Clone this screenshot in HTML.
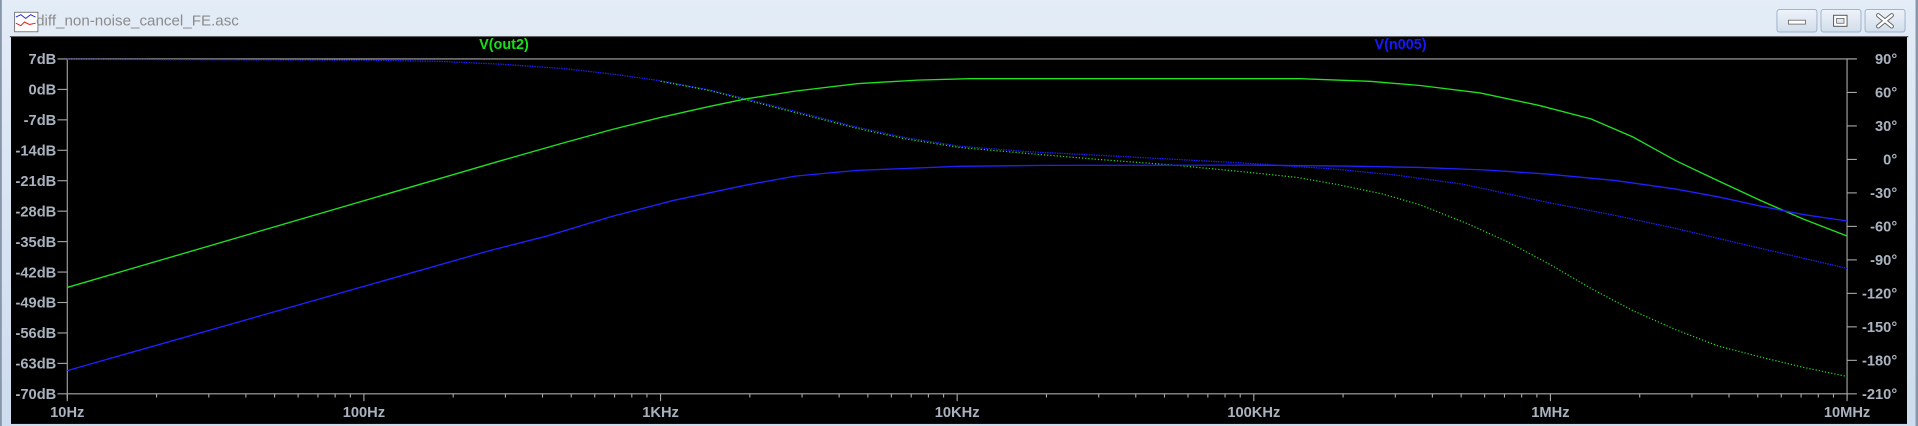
<!DOCTYPE html>
<html><head><meta charset="utf-8"><style>
html,body{margin:0;padding:0;background:#dfe8f3;overflow:hidden}
svg{display:block}
text{font-family:"Liberation Sans",sans-serif}
</style></head><body>
<svg id="s" width="1918" height="426" viewBox="0 0 1568 348.3" preserveAspectRatio="none" xmlns="http://www.w3.org/2000/svg">
<defs>
<linearGradient id="tb" x1="0" y1="0" x2="0" y2="1"><stop offset="0" stop-color="#e3ecf7"/><stop offset="1" stop-color="#cddcee"/></linearGradient>
<linearGradient id="bt" x1="0" y1="0" x2="0" y2="1"><stop offset="0" stop-color="#eef3f9"/><stop offset="1" stop-color="#d2deec"/></linearGradient>
</defs>
<rect x="0" y="0" width="1568" height="348.3" fill="url(#tb)"/>
<rect x="0" y="0" width="1.5" height="348.3" fill="#8796a8"/>
<rect x="1566" y="0" width="2" height="348.3" fill="#8796a8"/>
<rect x="12" y="10" width="19" height="16" fill="#fff" stroke="#555" stroke-width="0.6"/>
<polyline points="13,14 17,12 21,15 25,12 29,14" fill="none" stroke="#2b2bd8" stroke-width="0.8"/>
<polyline points="13,19 17,21 20,18 24,20 29,19" fill="none" stroke="#e02020" stroke-width="0.8"/>
<text x="29.5" y="21" font-size="12.4" fill="#8c8c8c">diff_non-noise_cancel_FE.asc</text>
<g stroke="#8aa0bb" stroke-width="0.6" fill="url(#bt)">
<rect x="1452.7" y="7.8" width="32.7" height="18.4" rx="2"/>
<rect x="1488.7" y="7.8" width="32.7" height="18.4" rx="2"/>
<rect x="1524.7" y="7.8" width="32.7" height="18.4" rx="2"/>
</g>
<rect x="1462" y="16.5" width="14" height="3.2" fill="#fff" stroke="#555" stroke-width="0.6"/>
<rect x="1499" y="12.5" width="11" height="9" fill="#fff" stroke="#555" stroke-width="0.8"/>
<rect x="1501.5" y="15" width="6" height="4" fill="#dfe8f3" stroke="#555" stroke-width="0.6"/>
<g stroke="#666" stroke-width="3.6" stroke-linecap="round"><line x1="1535.5" y1="12.5" x2="1546.5" y2="21.5"/><line x1="1546.5" y1="12.5" x2="1535.5" y2="21.5"/></g>
<g stroke="#fff" stroke-width="2" stroke-linecap="round"><line x1="1535.5" y1="12.5" x2="1546.5" y2="21.5"/><line x1="1546.5" y1="12.5" x2="1535.5" y2="21.5"/></g>
<rect x="8" y="29.5" width="1552" height="1" fill="#555"/>
<rect x="9" y="30.3" width="1550" height="316.3" fill="#000"/>
<g id="axes" stroke="#a8a8a8" stroke-width="0.9" fill="none">
<line x1="55" y1="48.2" x2="1518" y2="48.2"/>
<line x1="55" y1="48.2" x2="55" y2="326"/>
<line x1="1510" y1="48.2" x2="1510" y2="326"/>
<line x1="55" y1="322" x2="1510" y2="322"/>
</g>
<g id="lab" font-size="12" font-weight="bold" fill="#a9b3bf"></g>
<text x="412" y="40" font-size="11.8" font-weight="bold" fill="#18e018" text-anchor="middle">V(out2)</text>
<text x="1145" y="40" font-size="11.8" font-weight="bold" fill="#1818ff" text-anchor="middle">V(n005)</text>
<g fill="none" stroke-width="1">
<polyline stroke="#2020ff" stroke-dasharray="1.2 0.8" points="55,48.5 300,49.2 360,50.2 410,52.5 460,56 500,60.5 540,66 580,73.5 609,80.7 650,91 700.7,104 740,112.5 784,119.5 840,124 909,127.5 1022,133.6 1091.6,138.3 1140,143 1196,150.6 1265.8,165.6 1320,176 1370,186.8 1440,203.2 1510,219.4"/>
<polyline stroke="#20e020" stroke-dasharray="1 1.6" points="540,66.5 580,74 609,81.5 650,92 700.7,105 740,113.5 784,120.5 840,125.5 900,130.5 960,135 1022,141 1060,145 1092,150.6 1130,158.5 1161,167.5 1200,183 1231,197 1265,215 1300.6,235.8 1335,254 1370,269.6 1405,283 1440,292.1 1475,300.5 1510,307.8"/>
<polyline stroke="#20e020" stroke-width="1.1" points="55,235 408.8,131.6 460,117 500,106 540,96 580,87 609,81 650,74.5 700.7,68.4 750,65.5 792.5,64.3 1063,64.3 1120,66.5 1161,69.9 1210,76 1258.7,86.3 1300.6,97.2 1335,112 1370,131.4 1405,148 1440,164.2 1474.6,179.3 1510,193"/>
<polyline stroke="#2020ff" stroke-width="1.1" points="55,303 400,205 446.3,193.2 500,177 550,164 609,151.5 650,144 700.7,139.3 784.2,136 855,135.2 1022,135 1100,135.8 1161,136.9 1215,139 1265,142.3 1320,147.5 1370,154.6 1405,161 1440,168.7 1475,175.5 1510,180.7"/>
</g>
</svg>
<script>
(function(){
var ns="http://www.w3.org/2000/svg",ax=document.getElementById("axes"),lab=document.getElementById("lab");
function L(x1,y1,x2,y2){var l=document.createElementNS(ns,"line");l.setAttribute("x1",x1);l.setAttribute("y1",y1);l.setAttribute("x2",x2);l.setAttribute("y2",y2);ax.appendChild(l);}
function T(x,y,s,a){var t=document.createElementNS(ns,"text");t.setAttribute("x",x);t.setAttribute("y",y);t.setAttribute("text-anchor",a);t.textContent=s;lab.appendChild(t);}
var dec=(1510-55)/6,names=["10Hz","100Hz","1KHz","10KHz","100KHz","1MHz","10MHz"];
for(var d=0;d<=6;d++){var x=55+d*dec;L(x,322,x,328);T(x,341,names[d],"middle");
 if(d<6)for(var k=2;k<10;k++){var xx=x+Math.log10(k)*dec;L(xx,322,xx,325);}}
var sp=(322-48.2)/11;
for(var i=0;i<=11;i++){var y=48.2+i*sp;L(47,y,55,y);T(46,y+4.3,(7-7*i)+"dB","end");}
var sp2=(322-48.2)/10;
for(var j=0;j<=10;j++){var y2=48.2+j*sp2;L(1510,y2,1518,y2);T(1551,y2+4.3,(90-30*j)+"\u00b0","end");}
})();
</script>
</body></html>
